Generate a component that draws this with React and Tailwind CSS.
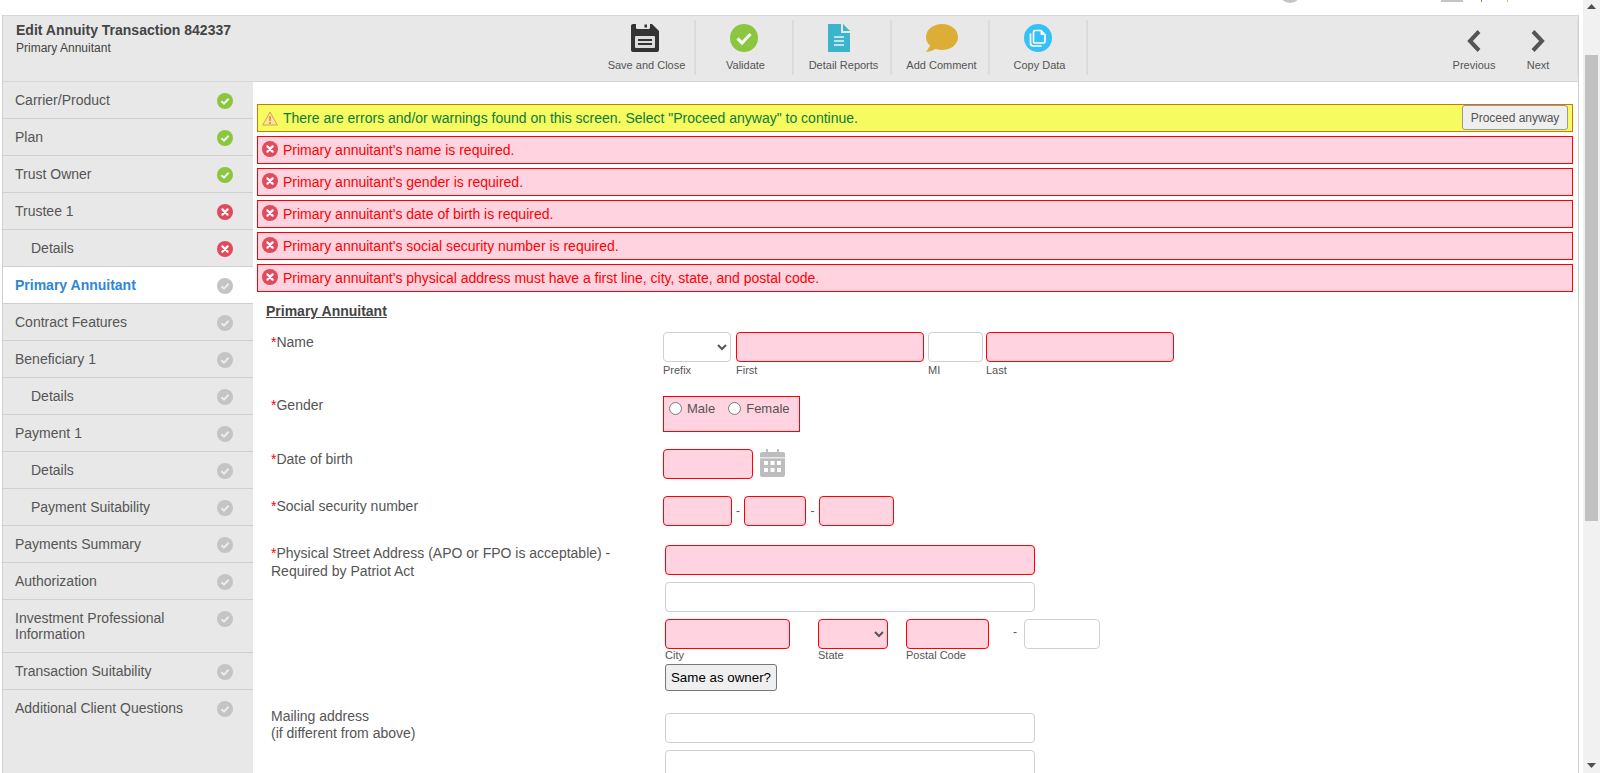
import React from 'react';

const steps = [
    { label: 'Carrier/Product', state: 'ok' },
    { label: 'Plan', state: 'ok' },
    { label: 'Trust Owner', state: 'ok' },
    { label: 'Trustee 1', state: 'error' },
    { label: 'Details', state: 'error', sub: true },
    { label: 'Primary Annuitant', state: 'pending', active: true },
    { label: 'Contract Features', state: 'pending' },
    { label: 'Beneficiary 1', state: 'pending' },
    { label: 'Details', state: 'pending', sub: true },
    { label: 'Payment 1', state: 'pending' },
    { label: 'Details', state: 'pending', sub: true },
    { label: 'Payment Suitability', state: 'pending', sub: true },
    { label: 'Payments Summary', state: 'pending' },
    { label: 'Authorization', state: 'pending' },
    { label: 'Investment Professional Information', state: 'pending', tall: true },
    { label: 'Transaction Suitability', state: 'pending' },
    { label: 'Additional Client Questions', state: 'pending', last: true },
];

const errors = [
    "Primary annuitant's name is required.",
    "Primary annuitant's gender is required.",
    "Primary annuitant's date of birth is required.",
    "Primary annuitant's social security number is required.",
    "Primary annuitant's physical address must have a first line, city, state, and postal code.",
];

function StateIcon({ state }) {
    if (state === 'error') {
        return (
            <svg width="16" height="16" viewBox="0 0 16 16">
                <circle cx="8" cy="8" r="8" fill="#e2495c" />
                <path d="M5.4 5.4 10.6 10.6M10.6 5.4 5.4 10.6" stroke="#fff" strokeWidth="2.2" strokeLinecap="round" />
            </svg>
        );
    }
    const fill = state === 'ok' ? '#8cc63f' : '#c4c4c4';
    const tick = state === 'ok' ? '#f4f4f4' : '#ececec';
    return (
        <svg width="16" height="16" viewBox="0 0 16 16">
            <circle cx="8" cy="8" r="8" fill={fill} />
            <path d="M4.4 8.2 7 10.7 11.6 5.8" fill="none" stroke={tick} strokeWidth="2" />
        </svg>
    );
}

function SaveIcon() {
    return (
        <svg width="28" height="28" viewBox="0 0 28 28">
            <path d="M2 0H21L28 7V26a2 2 0 0 1-2 2H2a2 2 0 0 1-2-2V2a2 2 0 0 1 2-2Z" fill="#333" />
            <path d="M5 0H19V3.5a1.5 1.5 0 0 1-1.5 1.5H6.500a1.500 1.500 0 0 1-1.500-1.500Z" fill="#e8e8e8" />
            <rect x="13.500" y="0.500" width="2.500" height="3" fill="#333" />
            <rect x="4" y="12" width="20" height="12" rx="1" fill="#ddd" />
            <rect x="7" y="15" width="14" height="2" fill="#333" />
            <rect x="7" y="19" width="14" height="2" fill="#333" />
        </svg>
    );
}

function ValidateIcon() {
    return (
        <svg width="28" height="28" viewBox="0 0 28 28">
            <circle cx="14" cy="14" r="14" fill="#8cc63f" />
            <path d="M7.500 14.500 12 19 20.500 10" fill="none" stroke="#f4f4f4" strokeWidth="3.200" />
        </svg>
    );
}

function ReportIcon() {
    return (
        <svg width="22" height="28" viewBox="0 0 22 28">
            <path d="M0 0H13V9H22V28H0Z" fill="#3cb4cc" />
            <path d="M15 0 22 7H15Z" fill="#3cb4cc" />
            <path d="M6 13H16M6 17H16M6 21H16" stroke="#e8f4f7" strokeWidth="1.500" />
        </svg>
    );
}

function CommentIcon() {
    return (
        <svg width="32" height="28" viewBox="0 0 32 28">
            <ellipse cx="16" cy="13" rx="16" ry="13" fill="#dcae36" />
            <path d="M6 19 0 28C4 27.500 9 26 12 23Z" fill="#dcae36" />
        </svg>
    );
}

function CopyIcon() {
    return (
        <svg width="28" height="28" viewBox="0 0 28 28">
            <circle cx="14" cy="14" r="14" fill="#36c0f8" />
            <path d="M11 6.500H17L21 10.500V17.500a1.500 1.500 0 0 1-1.500 1.500H11a1.500 1.500 0 0 1-1.500-1.500V8a1.500 1.500 0 0 1 1.500-1.500Z" fill="none" stroke="#fff" strokeWidth="1.700" />
            <path d="M17 6.500V10.500H21" fill="#fff" stroke="#fff" strokeWidth="1" />
            <path d="M6.500 10V19a3 3 0 0 0 3 3H17" fill="none" stroke="#fff" strokeWidth="1.700" strokeLinecap="round" />
        </svg>
    );
}

function ToolButton({ label, children, textClass = 'ml-[3px]' }) {
    return (
        <div className="w-[98px] h-[55px] mt-[4px] border-r-2 border-[#dcdcdc] flex flex-col items-center pt-[4px]">
            <div className="h-[28px]">{children}</div>
            <span className={`mt-[7px] text-[11px] leading-[13px] whitespace-nowrap ${textClass}`}>{label}</span>
        </div>
    );
}

function NavButton({ label, d }) {
    return (
        <div className="w-[64px] flex flex-col items-center pt-[14px]">
            <svg width="14" height="22" viewBox="0 0 14 22">
                <path d={d} fill="none" stroke="#555" strokeWidth="4" />
            </svg>
            <span className="mt-[7px] text-[11px] leading-[13px]">{label}</span>
        </div>
    );
}

function SideRow({ step }) {
    const height = step.tall ? 'h-[53px]' : 'h-[37px]';
    const indent = step.sub ? 'pl-[28px]' : 'pl-[12px]';
    const border = step.last ? '' : 'border-b border-[#cfcfcf]';
    const active = step.active ? 'bg-white text-[#2f86d6] font-bold' : '';
    return (
        <div className={`flex items-start justify-between pr-[20px] pt-[10px] ${height} ${indent} ${border} ${active}`}>
            <span className="w-[175px] text-[14px] leading-4">{step.label}</span>
            <span className="mt-[1px]"><StateIcon state={step.state} /></span>
        </div>
    );
}

function WarningIcon() {
    return (
        <svg width="16" height="15" viewBox="0 0 16 15">
            <path d="M8 1 15.300 14H.7Z" fill="#fbe3a0" stroke="#e2a04a" strokeWidth="1" />
            <path d="M8 5V10M8 11V13" stroke="#d98a20" strokeWidth="1.500" />
        </svg>
    );
}

function ErrorBar({ text }) {
    return (
        <div className="h-[28px] mt-[4px] bg-[#ffd4e0] border border-[#ff0000] flex items-center pl-[4px] text-[14px] text-[#ff0000]">
            <span className="mb-[2px]"><StateIcon state="error" /></span>
            <span className="ml-[5px]">{text}</span>
        </div>
    );
}

function Field({ bad, className = '' }) {
    const tone = bad ? 'bg-[#ffd4e0] border-[#ff0000]' : 'bg-white border-[#ccd0d8]';
    return <input type="text" className={`h-[30px] border rounded-[4px] outline-none ${tone} ${className}`} />;
}

function Choice({ bad, className = '' }) {
    const tone = bad ? 'bg-[#ffd4e0] border-[#ff0000]' : 'bg-white border-[#ccd0d8]';
    return (
        <select className={`h-[30px] border rounded-[4px] outline-none text-[#555] ${tone} ${className}`}>
            <option></option>
        </select>
    );
}

function Caption({ children, tight }) {
    return <div className={`text-[11px] leading-[14px] whitespace-nowrap ${tight ? '-mt-[1px]' : 'pt-[1px]'}`}>{children}</div>;
}

function Label({ children, required, className = '' }) {
    return (
        <div className={`w-[397px] pl-[5px] pr-[40px] text-[14px] ${className}`}>
            {required && <span className="text-[#ff0000]">*</span>}
            {children}
        </div>
    );
}

function CalendarIcon() {
    return (
        <svg width="25" height="28" viewBox="0 0 25 28">
            <path d="M2 3H6V0H8V3H17V0H19V3H23a2 2 0 0 1 2 2V26a2 2 0 0 1-2 2H2a2 2 0 0 1-2-2V5a2 2 0 0 1 2-2Z" fill="#bdbdbd" />
            <rect x="0" y="8" width="25" height="1.500" fill="#e8e8e8" />
            <path d="M4 12h4v4H4ZM10.500 12h4v4h-4ZM17 12h4v4h-4ZM4 19h4v4H4ZM10.500 19h4v4h-4ZM17 19h4v4h-4Z" fill="#fff" />
        </svg>
    );
}

function Scrollbar() {
    return (
        <div className="ml-[4px] w-[17px] h-[773px] bg-[#f1f1f1] flex flex-col items-center">
            <svg className="mt-[4px]" width="9" height="5" viewBox="0 0 9 5"><path d="M4.500 0 9 5H0Z" fill="#505050" /></svg>
            <div className="mt-[46px] w-[13px] h-[466px] bg-[#c1c1c1]"></div>
            <div className="flex-1"></div>
            <svg className="mb-[5px]" width="9" height="5" viewBox="0 0 9 5"><path d="M0 0H9L4.500 5Z" fill="#505050" /></svg>
        </div>
    );
}

export default function App() {
    return (
        <div className="w-[1600px] h-[773px] overflow-hidden flex bg-white text-[#555] font-['Liberation_Sans',Arial,sans-serif]">
            <div className="w-[1579px] ml-0 flex flex-col">
                {/* scrolled away top bar, only its lower edge shows */}
                <div className="h-[15px] overflow-hidden flex items-start pl-[1279px]">
                    <div className="w-[22px] h-[22px] mt-[-19px] rounded-full border-[3px] border-[#c4c4c4] shrink-0"></div>
                    <div className="ml-[140px] w-[22px] h-[2px] bg-[#c4c4c4] shrink-0"></div>
                    <div className="ml-[18px] w-[1px] h-[2px] bg-[#c07a30] shrink-0"></div>
                    <div className="ml-[25px] w-[1px] h-[2px] bg-[#d8b060] shrink-0"></div>
                </div>
                <div className="ml-[2px] flex-1 flex flex-col border-x border-[#d0d0d0] min-h-0">
                    <div className="h-[67px] bg-[#e8e8e8] border-y border-[#d6d6d6] flex shrink-0">
                        <div className="w-[595px] pl-[13px] pt-[6px]">
                            <div className="text-[14px] leading-4 font-bold text-[#444]">Edit Annuity Transaction 842337</div>
                            <div className="mt-[3px] text-[12px] leading-[14px] text-[#444]">Primary Annuitant</div>
                        </div>
                        <ToolButton label="Save and Close" textClass="ml-[1px]"><div className="mr-[2px]"><SaveIcon /></div></ToolButton>
                        <ToolButton label="Validate"><ValidateIcon /></ToolButton>
                        <ToolButton label="Detail Reports"><div className="mr-[6px]"><ReportIcon /></div></ToolButton>
                        <ToolButton label="Add Comment"><div className="ml-[4px]"><CommentIcon /></div></ToolButton>
                        <ToolButton label="Copy Data"><CopyIcon /></ToolButton>
                        <div className="flex-1"></div>
                        <NavButton label="Previous" d="M12 1.500 3 11 12 20.500" />
                        <NavButton label="Next" d="M2 1.500 11 11 2 20.500" />
                        <div className="w-[8px] h-[55px] mt-[4px] border-r border-[#dcdcdc]"></div>
                    </div>
                    <div className="flex-1 flex min-h-0">
                        <div className="w-[250px] bg-[#e8e8e8] shrink-0">
                            {steps.map((step, i) => <SideRow key={i} step={step} />)}
                        </div>
                        <div className="flex-1 pl-[4px] pr-[5px] pt-[22px]">
                            <div className="h-[28px] bg-[#f6fb5f] border border-[#c87b00] flex items-center pl-[4px] pr-[4px] text-[14px] text-[#0f7a3c]">
                                <WarningIcon />
                                <span className="ml-[5px] mt-[1px]">There are errors and/or warnings found on this screen. Select "Proceed anyway" to continue.</span>
                                <button className="ml-auto mb-[1px] w-[106px] h-[25px] bg-[#efefef] border border-[#999] rounded-[3px] text-[12px] text-[#555]">Proceed anyway</button>
                            </div>
                            {errors.map(text => <ErrorBar key={text} text={text} />)}

                            <div className="pl-[9px] mt-[11px] text-[14px] leading-4 font-bold text-[#444] underline">Primary Annuitant</div>

                            <div className="pl-[9px] mt-[13px] flex">
                                <Label required className="pt-[2px] leading-4">Name</Label>
                                <div>
                                    <Choice className="w-[68px] block" />
                                    <Caption>Prefix</Caption>
                                </div>
                                <div className="ml-[5px]">
                                    <Field bad className="w-[188px] block" />
                                    <Caption>First</Caption>
                                </div>
                                <div className="ml-[4px]">
                                    <Field className="w-[55px] block" />
                                    <Caption>MI</Caption>
                                </div>
                                <div className="ml-[3px]">
                                    <Field bad className="w-[188px] block" />
                                    <Caption>Last</Caption>
                                </div>
                            </div>

                            <div className="pl-[9px] mt-[19px] flex">
                                <Label required className="pt-[1px] leading-4">Gender</Label>
                                <div className="w-[137px] h-[36px] bg-[#ffd4e0] border border-[#ff0000] flex items-start pl-[5px] pt-[4px] text-[13px]">
                                    <input type="radio" className="w-[13px] h-[13px] mt-[1px]" />
                                    <span className="ml-[5px] leading-4">Male</span>
                                    <input type="radio" className="ml-[13px] w-[13px] h-[13px] mt-[1px]" />
                                    <span className="ml-[5px] leading-4">Female</span>
                                </div>
                            </div>

                            <div className="pl-[9px] mt-[17px] flex">
                                <Label required className="pt-[2px] leading-4">Date of birth</Label>
                                <Field bad className="w-[90px]" />
                                <div className="ml-[7px]"><CalendarIcon /></div>
                            </div>

                            <div className="pl-[9px] mt-[17px] flex">
                                <Label required className="pt-[2px] leading-4">Social security number</Label>
                                <Field bad className="w-[69px]" />
                                <span className="w-[12px] text-center text-[12px] leading-[30px]">-</span>
                                <Field bad className="w-[62px]" />
                                <span className="w-[13px] text-center text-[12px] leading-[30px]">-</span>
                                <Field bad className="w-[75px]" />
                            </div>

                            <div className="pl-[9px] mt-[19px] flex">
                                <Label required className="-mt-[1px] leading-[18px]">Physical Street Address (APO or FPO is acceptable) - Required by Patriot Act</Label>
                                <div className="ml-[2px]">
                                    <Field bad className="w-[370px] block" />
                                    <Field className="w-[370px] block mt-[7px]" />
                                    <div className="flex mt-[7px]">
                                        <div className="w-[153px]">
                                            <Field bad className="w-[125px] block" />
                                            <Caption tight>City</Caption>
                                        </div>
                                        <div className="w-[88px]">
                                            <Choice bad className="w-[70px] block" />
                                            <Caption tight>State</Caption>
                                        </div>
                                        <div className="w-[83px]">
                                            <Field bad className="w-[83px] block" />
                                            <Caption tight>Postal Code</Caption>
                                        </div>
                                        <span className="ml-[24px] w-[11px] text-[12px] leading-[26px]">-</span>
                                        <Field className="w-[76px]" />
                                    </div>
                                    <button className="mt-[2px] w-[112px] h-[27px] bg-[#efefef] border border-[#767676] rounded-[3px] text-[13.33px] text-black block">Same as owner?</button>
                                </div>
                            </div>

                            <div className="pl-[9px] mt-[22px] flex">
                                <Label className="-mt-[5px] leading-[17px]">Mailing address<br />(if different from above)</Label>
                                <div className="ml-[2px]">
                                    <Field className="w-[370px] block" />
                                    <Field className="w-[370px] block mt-[7px]" />
                                </div>
                            </div>
                        </div>
                    </div>
                </div>
            </div>
            <Scrollbar />
        </div>
    );
}
